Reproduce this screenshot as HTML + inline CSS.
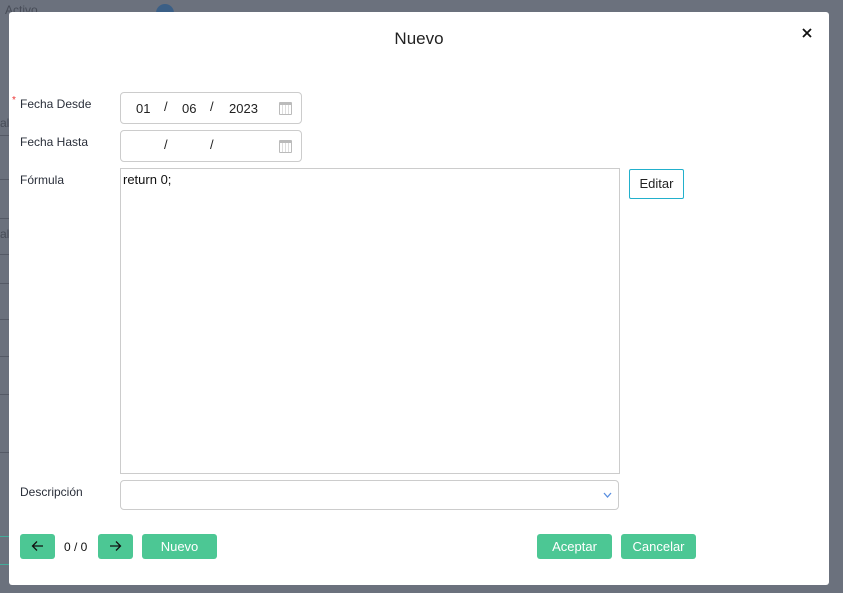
<!DOCTYPE html>
<html><head><meta charset="utf-8"><style>
*{box-sizing:border-box}
body{margin:0;width:843px;height:593px;background:#6b717d;font-family:"Liberation Sans",sans-serif;position:relative;overflow:hidden;color:#222}
.bgt{position:absolute;color:#474c57;font-size:12px}
.line{position:absolute;left:0;width:9px;height:1px;background:#555a66}
.modal{position:absolute;left:9px;top:12px;width:820px;height:573px;background:#fff;border-radius:3px}
.title{position:absolute;top:17px;left:0;width:100%;text-align:center;font-size:17px;color:#222}
.lbl{position:absolute;left:11px;font-size:12px;color:#2a2f3a}
.inp{position:absolute;border:1px solid #ccc;border-radius:4px;background:#fff}
.dt{font-size:13px;position:absolute;color:#222}
.cal{position:absolute;right:9px;top:9px;width:13px;height:13px;border:1px solid #bbb;border-top-width:3px;border-radius:1px;background:repeating-linear-gradient(90deg,#fff 0 2px,#ddd 2px 3px)}
.btn{position:absolute;background:#4cc794;color:#fff;border-radius:3px;font-size:13px;text-align:center;line-height:25px;height:25px}
.btn svg{position:absolute;left:11px;top:6px}
</style></head><body>
<div class="bgt" style="left:5px;top:3px">Activo</div>
<div style="position:absolute;left:156px;top:4px;width:18px;height:10px;border-radius:9px 9px 0 0;background:#3b5f86"></div>
<div class="bgt" style="left:0;top:116px">al</div>
<div class="bgt" style="left:0;top:227px">al</div>
<div class="line" style="top:135px"></div><div class="line" style="top:179px"></div>
<div class="line" style="top:218px"></div><div class="line" style="top:254px"></div>
<div class="line" style="top:283px"></div><div class="line" style="top:319px"></div>
<div class="line" style="top:356px"></div><div class="line" style="top:394px"></div>
<div class="line" style="top:452px"></div><div class="line" style="top:536px;background:#4a9"></div>
<div class="line" style="top:564px;background:#4a9"></div>
<div class="modal">
<div class="title">Nuevo</div>
<svg style="position:absolute;left:793px;top:16px" width="10" height="10"><path d="M1 1L9 9M9 1L1 9" stroke="#111" stroke-width="1.8"/></svg>
<div style="position:absolute;left:3px;top:83px;color:#e33;font-size:10px">*</div>
<div class="lbl" style="top:85px">Fecha Desde</div>
<div class="lbl" style="top:123px">Fecha Hasta</div>
<div class="lbl" style="top:161px">Fórmula</div>
<div class="lbl" style="top:473px">Descripción</div>
<div class="inp" style="left:111px;top:80px;width:182px;height:32px">
<span class="dt" style="left:15px;top:8px">01</span><span class="dt" style="left:43px;top:6px">/</span>
<span class="dt" style="left:61px;top:8px">06</span><span class="dt" style="left:89px;top:6px">/</span>
<span class="dt" style="left:108px;top:8px">2023</span><div class="cal"></div></div>
<div class="inp" style="left:111px;top:118px;width:182px;height:32px">
<span class="dt" style="left:43px;top:6px">/</span><span class="dt" style="left:89px;top:6px">/</span><div class="cal"></div></div>
<div class="inp" style="left:111px;top:156px;width:500px;height:306px;border-radius:0;font-size:13px;padding:3px 2px;color:#111">return 0;</div>
<div style="position:absolute;left:620px;top:157px;width:55px;height:30px;border:1px solid #22b0cc;border-radius:2px;font-size:13px;line-height:28px;text-align:center;color:#222">Editar</div>
<div class="inp" style="left:111px;top:468px;width:499px;height:30px"><svg style="position:absolute;right:5px;top:10px" width="10" height="8"><path d="M1 2L4.5 6L8 2" stroke="#5a8fe0" stroke-width="1.3" fill="none"/></svg></div>
<div class="btn" style="left:11px;top:522px;width:35px"><svg width="13" height="12"><path d="M12 6H1.5M6 1.5L1.5 6L6 10.5" stroke="#111" stroke-width="1.3" fill="none"/></svg></div>
<div style="position:absolute;left:55px;top:528px;font-size:12px;color:#111">0 / 0</div>
<div class="btn" style="left:89px;top:522px;width:35px"><svg width="13" height="12"><path d="M1 6H11.5M7 1.5L11.5 6L7 10.5" stroke="#111" stroke-width="1.3" fill="none"/></svg></div>
<div class="btn" style="left:133px;top:522px;width:75px">Nuevo</div>
<div class="btn" style="left:528px;top:522px;width:75px">Aceptar</div>
<div class="btn" style="left:612px;top:522px;width:75px">Cancelar</div>
</div>
</body></html>
